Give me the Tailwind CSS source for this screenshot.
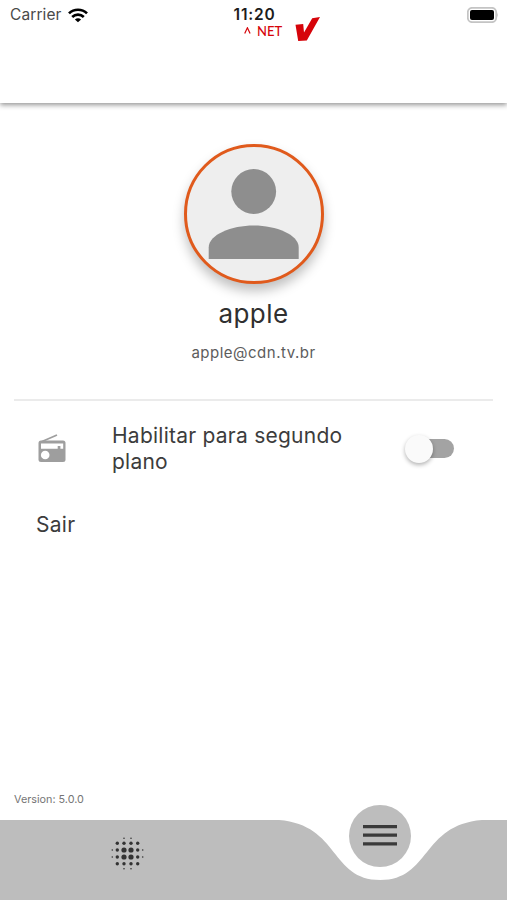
<!DOCTYPE html>
<html lang="pt-BR">
<head>
  <meta charset="UTF-8" />
  <meta name="viewport" content="width=device-width, initial-scale=1.0" />
  <title>Perfil</title>
  <script src="https://cdn.jsdelivr.net/npm/@tailwindcss/browser@4"></script>
</head>
<body class="bg-white font-['Inter','Liberation_Sans',sans-serif] text-[#3c3c3c]">
  <div class="flex h-[900px] w-[507px] flex-col overflow-hidden">

    <!-- Header -->
    <header class="h-[103px] shrink-0 bg-white shadow-[0_2px_5px_rgba(0,0,0,0.42)]">
      <div class="grid h-[30px] grid-cols-3 items-center pl-[10px] pr-[8px]">
        <div class="flex items-center gap-[6px]">
          <span class="text-[15.5px] leading-5 tracking-[0.1px] text-[#4a4a4a]">Carrier</span>
          <svg class="h-[15px] w-[20px]" viewBox="0 0 20 15" fill="none" stroke="#000" stroke-width="2.7">
            <path d="M1 5.4C6 .5 14 .5 19 5.4" />
            <path d="M4.2 8.9C7.5 5.8 12.5 5.8 15.8 8.9" />
            <path d="M10 14.3 6.9 11.5C8.6 9.8 11.4 9.8 13.1 11.5Z" fill="#000" stroke="none" />
          </svg>
        </div>
        <span class="text-center text-[15.5px] font-semibold leading-4 tracking-[0.8px] text-[#1c1c1c]">11:20</span>
        <svg class="h-[16px] w-[32px] justify-self-end" viewBox="0 0 32 16">
          <rect x=".8" y=".8" width="28.4" height="14.4" rx="4.5" fill="#fff" stroke="#c4c4c4" stroke-width="1.8" />
          <rect x="3" y="3" width="24" height="10" rx="2" fill="#000" />
          <path d="M30.3 5.5q1.4 2.5 0 5z" fill="#b5b5b5" />
        </svg>
      </div>
      <div class="-mt-[14px] flex h-[26px] pl-[244px] text-[#d6040a]">
        <svg class="mt-[11px] h-[7px] w-[7px]" viewBox="0 0 7 7" fill="none" stroke="currentColor" stroke-width="1.2">
          <path d="M.7 6.5 3.4.8 6.1 6.5" />
        </svg>
        <span class="ml-[6px] mt-[8px] h-[14px] font-['Lato',sans-serif] text-[13px] font-medium leading-[14px]">NET</span>
        <svg class="ml-[13px] mt-[1px] h-[24px] w-[25px]" viewBox="0 0 25 24" fill="currentColor">
          <path d="M.5 7.8 8.2 7 9 15.4 17.2 1.2 25 0 11.8 23.5 3.2 24z" />
        </svg>
      </div>
    </header>

    <!-- Profile -->
    <section class="mt-[41px] flex flex-col items-center">
      <div class="h-[140px] w-[140px] rounded-full border-3 border-[#e05a1c] bg-[#eee] shadow-[0_7px_12px_rgba(0,0,0,0.25)]">
        <svg class="h-full w-full" viewBox="0 0 134 134" fill="#8e8e8e">
          <circle cx="66.7" cy="44.5" r="22.4" />
          <path d="M21.7 112V100.5C21.7 87.5 44.5 78.5 66.7 78.5S111.7 87.5 111.7 100.5V112z" />
        </svg>
      </div>
      <h1 class="mt-[14px] text-[26px] leading-8 tracking-[0.4px] text-[#303030]">apple</h1>
      <p class="mt-[13px] text-[15px] leading-5 tracking-[0.5px] text-[#5c5c5c]">apple@cdn.tv.br</p>
    </section>

    <!-- Options -->
    <section class="mx-[14px] mt-[36px] border-t-2 border-[#ebebeb]">
      <div class="flex h-[95px] items-center">
        <svg class="mb-[2px] ml-[24px] h-[28px] w-[28px]" viewBox="0 0 28 28">
          <path d="M4 7.5 19 1" stroke="#9e9e9e" stroke-width="1.8" />
          <rect x=".5" y="6.5" width="27" height="21.5" rx="2.5" fill="#9e9e9e" />
          <path d="M3 9.5h22.2v5.3h-2.8v-2.7h-2.7v2.7H3z" fill="#fff" />
          <circle cx="7.2" cy="21" r="4.3" fill="#fff" />
        </svg>
        <p class="ml-[46px] w-[260px] text-[21px] leading-[25.5px] tracking-[0.24px]">Habilitar para segundo plano</p>
        <div class="ml-[36px] flex h-[19px] w-[46px] items-center rounded-full bg-[#a3a3a3]">
          <div class="-ml-[3px] h-[28px] w-[28px] rounded-full bg-[#fafafa] shadow-[0_2px_4px_rgba(0,0,0,0.3)]"></div>
        </div>
      </div>
      <p class="ml-[22px] mt-[15px] text-[21px] leading-7 tracking-[0.3px]">Sair</p>
    </section>

    <p class="mb-[12px] ml-[14px] mt-auto text-[10.8px] leading-4 text-[#757575]">Version: 5.0.0</p>

    <!-- Bottom bar -->
    <nav class="relative h-[80px] shrink-0">
      <svg class="h-full w-full" viewBox="0 0 507 80" fill="#bdbdbd">
        <path d="M0 0H279C340 5 330 60 380.3 60S421 5 482 0H507V80H0z" />
      </svg>
      <svg class="absolute left-[111px] top-[17px] h-[33px] w-[33px]" viewBox="0 0 33 33" fill="#333">
        <circle cx="13" cy="13" r="2.6" /><circle cx="20" cy="13" r="2.6" />
        <circle cx="13" cy="20" r="2.6" /><circle cx="20" cy="20" r="2.6" />
        <circle cx="6.3" cy="6.3" r="1.7" /><circle cx="13" cy="6.3" r="1.7" /><circle cx="20" cy="6.3" r="1.7" /><circle cx="26.7" cy="6.3" r="1.7" />
        <circle cx="6.3" cy="13" r="1.7" /><circle cx="26.7" cy="13" r="1.7" />
        <circle cx="6.3" cy="20" r="1.7" /><circle cx="26.7" cy="20" r="1.7" />
        <circle cx="6.3" cy="26.7" r="1.7" /><circle cx="13" cy="26.7" r="1.7" /><circle cx="20" cy="26.7" r="1.7" /><circle cx="26.7" cy="26.7" r="1.7" />
        <circle cx="13" cy="1.3" r=".8" /><circle cx="20" cy="1.3" r=".8" />
        <circle cx="13" cy="31.7" r=".8" /><circle cx="20" cy="31.7" r=".8" />
        <circle cx="1.3" cy="13" r=".8" /><circle cx="1.3" cy="20" r=".8" />
        <circle cx="31.7" cy="13" r=".8" /><circle cx="31.7" cy="20" r=".8" />
      </svg>
      <button class="absolute -top-[15px] left-[349px] flex h-[62px] w-[62px] items-center justify-center rounded-full bg-[#bdbdbd]">
        <svg class="mb-[2px] h-[21px] w-[34px]" viewBox="0 0 34 21" fill="#3a3a3a">
          <path d="M0 0h34v3.2H0zM0 8.6h34v3.2H0zM0 17.2h34v3.2H0z" />
        </svg>
      </button>
    </nav>
  </div>
</body>
</html>
